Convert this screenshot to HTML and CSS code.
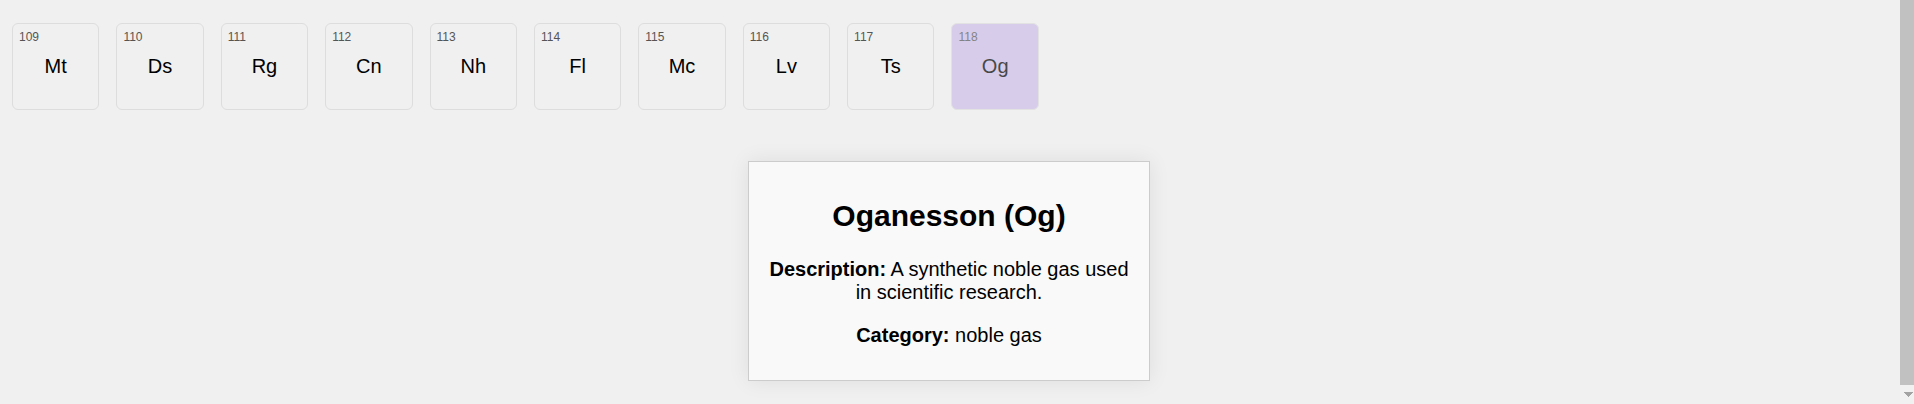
FILE: index.html
```html
<!DOCTYPE html>
<html lang="en">
<head>
<meta charset="utf-8">
<title>Periodic Table</title>
<link rel="stylesheet" href="styles.css">
</head>
<body>
<div class="page">
  <main class="content">
    <div class="elements">
      <button type="button" class="element"><span class="number">109</span>Mt</button>
      <button type="button" class="element"><span class="number">110</span>Ds</button>
      <button type="button" class="element"><span class="number">111</span>Rg</button>
      <button type="button" class="element"><span class="number">112</span>Cn</button>
      <button type="button" class="element"><span class="number">113</span>Nh</button>
      <button type="button" class="element"><span class="number">114</span>Fl</button>
      <button type="button" class="element"><span class="number">115</span>Mc</button>
      <button type="button" class="element"><span class="number">116</span>Lv</button>
      <button type="button" class="element"><span class="number">117</span>Ts</button>
      <button type="button" class="element active"><span class="number">118</span>Og</button>
    </div>
    <section class="info">
      <h2>Oganesson (Og)</h2>
      <p><strong>Description:</strong> A synthetic noble gas used in scientific research.</p>
      <p><strong>Category:</strong> noble gas</p>
    </section>
  </main>
  <div class="scrollbar" aria-hidden="true">
    <div class="thumb"></div>
    <svg class="arrow" width="9" height="5" viewBox="0 0 9 5"><path d="M0 0h9v1H8v1H7v1H6v1H5v1H4V4H3V3H2V2H1V1H0z" fill="#a3a3a3"/></svg>
  </div>
</div>
</body>
</html>
```
FILE: styles.css
```css
* {
  box-sizing: border-box;
}

body {
  margin: 0;
  background: #f0f0f0;
  color: #000;
  font-family: "Liberation Sans", Arial, sans-serif;
  font-size: 20px;
  line-height: 23px;
}

.page {
  display: flex;
  min-height: 100vh;
}

.content {
  flex: 1;
  padding: 23px 2px 0 0;
}

.elements {
  display: grid;
  grid-template-columns: repeat(18, 1fr);
  gap: 17px;
  padding: 0 24px 0 12px;
}

.element {
  position: relative;
  display: flex;
  align-items: center;
  justify-content: center;
  min-width: 0;
  aspect-ratio: 1;
  padding: 0;
  border: 1px solid #ddd;
  border-radius: 6px;
  background: transparent;
  color: inherit;
  font: inherit;
  cursor: pointer;
}

.element.active {
  background: #cdbde8;
  opacity: 0.7;
}

.number {
  position: absolute;
  top: 6px;
  left: 6px;
  color: #555;
  font-size: 12px;
  line-height: 14px;
}

.info {
  width: 402px;
  max-width: 100%;
  margin: 51px auto 0;
  padding: 36px 20px 33px;
  border: 1px solid #ccc;
  background: #f9f9f9;
  box-shadow: 0 0 20px rgba(0, 0, 0, 0.08);
  text-align: center;
}

.info h2 {
  margin: 0 0 24px;
  font-size: 30px;
  line-height: 36px;
}

.info p {
  margin: 0 0 20px;
}

.info p:last-child {
  margin-bottom: 0;
}

.scrollbar {
  display: flex;
  flex-direction: column;
  align-items: center;
  width: 14px;
  padding-bottom: 7px;
  background: #f1f1f1;
}

.thumb {
  flex: 1;
  width: 100%;
  margin-bottom: 7px;
  background: #c1c1c1;
}

.arrow {
  margin-left: 2px;
}
```
